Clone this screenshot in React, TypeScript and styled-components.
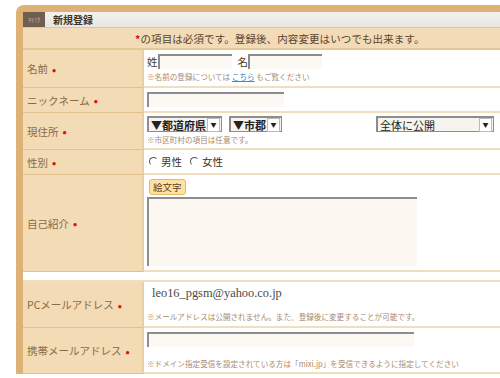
import * as React from 'react';
import styled, { createGlobalStyle } from 'styled-components';

const GlobalStyle = createGlobalStyle`
  html, body {
    margin: 0;
    padding: 0;
    background: #ffffff;
    overflow: hidden;
  }
  body {
    font-family: 'Noto Sans CJK JP', 'Noto Sans', sans-serif;
  }
`;

const Page = styled.div`
  width: 500px;
  height: 378px;
  padding: 5px 0 0 16px;
  box-sizing: border-box;
  overflow: hidden;
`;

const Frame = styled.div`
  width: 500px;
  border-left: 7px solid #deb277;
  border-top: 7px solid #deb277;
  border-top-left-radius: 8px;
  background: #deb277;
`;

const Header = styled.div`
  display: flex;
  align-items: center;
  height: 15px;
  background: linear-gradient(#f4f2ee, #e9e5df);
  border-bottom: 1px solid #d9c6a4;
`;

const HeaderBadge = styled.span`
  display: flex;
  align-items: center;
  justify-content: center;
  width: 22px;
  height: 15px;
  background: #6e5f50;
  color: #c8bba8;
  font-size: 6px;
`;

const HeaderTitle = styled.span`
  margin-left: 8px;
  font-size: 10px;
  font-weight: 700;
  color: #3e3428;
`;

const Notice = styled.div`
  height: 20px;
  display: flex;
  align-items: center;
  padding-left: 112px;
  background: #f2dbb6;
  border-bottom: 2px solid #e6c896;
  font-size: 10.5px;
  color: #5a4330;
  letter-spacing: 0.1px;
`;

const Req = styled.span`
  color: #d2140f;
  font-weight: 700;
`;

const Table = styled.div`
  display: grid;
  grid-template-columns: 121px 1fr;
  background: #ffffff;
`;

const Label = styled.div<{ h: number }>`
  height: ${(p): string => `${p.h}px`};
  display: flex;
  align-items: center;
  padding-left: 4px;
  background: #f2dbb5;
  border-right: 2px solid #e9cfa2;
  border-bottom: 1px solid #e2c28c;
  font-size: 10.5px;
  color: #8c6a44;
  white-space: nowrap;
`;

const Dot = styled.span`
  color: #d2140f;
  margin-left: 4px;
  font-size: 11px;
  font-weight: 700;
`;

const Value = styled.div<{ h: number }>`
  height: ${(p): string => `${p.h}px`};
  display: flex;
  flex-direction: column;
  justify-content: center;
  gap: 2px;
  padding-left: 3px;
  border-bottom: 2px solid #efdfbf;
  box-sizing: border-box;
`;

const Spacer = styled.div`
  grid-column: 1 / 3;
  height: 8px;
  background: #ffffff;
  border-bottom: 2px solid #efdfbf;
`;

const Line = styled.div`
  display: flex;
  align-items: center;
`;

const Kanji = styled.span`
  font-size: 10.5px;
  color: #4a3a2c;
`;

const Input = styled.div<{ w: number }>`
  width: ${(p): string => `${p.w}px`};
  height: 15px;
  background: #fcf8f3;
  border-top: 2px solid #8d8d8d;
  border-left: 2px solid #8d8d8d;
  box-sizing: border-box;
`;

const Note = styled.div`
  font-size: 7.6px;
  color: #a88a6c;
  white-space: nowrap;
`;

const Link = styled.span`
  color: #3a8bc8;
  text-decoration: underline;
`;

const Select = styled.div<{ w: number }>`
  width: ${(p): string => `${p.w}px`};
  height: 16px;
  display: flex;
  align-items: center;
  justify-content: space-between;
  border: 1px solid #8d8d8d;
  border-top-width: 2px;
  border-left-width: 2px;
  background: #f7f3ee;
  box-sizing: border-box;
  font-size: 11px;
  font-weight: 700;
  color: #222;
  padding-left: 2px;
  margin-right: 7px;
`;

const SelectArrow = styled.span`
  width: 11px;
  height: 12px;
  margin-right: 1px;
  display: flex;
  align-items: center;
  justify-content: center;
  background: #fff;
  border: 1px solid #bbb;
  font-size: 6px;
  color: #222;
`;

const Radio = styled.span`
  display: inline-block;
  width: 7px;
  height: 7px;
  border-radius: 50%;
  border: 1.5px solid transparent;
  border-top-color: #555;
  border-left-color: #555;
  margin: 0 3px 0 2px;
`;

const RadioText = styled.span`
  font-size: 10.5px;
  color: #3c3228;
  margin-right: 6px;
`;

const EmojiButton = styled.span`
  align-self: flex-start;
  margin-left: 2px;
  padding: 0 3px;
  height: 14px;
  line-height: 14px;
  font-size: 9.5px;
  color: #5a4026;
  background: #fde2a2;
  border: 1px solid #e6b766;
  border-radius: 3px;
`;

const TextArea = styled.div`
  width: 270px;
  height: 69px;
  background: #fcf7f1;
  border-top: 2px solid #8d8d8d;
  border-left: 2px solid #8d8d8d;
  box-sizing: border-box;
`;

const Email = styled.div`
  font-family: 'Liberation Serif', serif;
  font-size: 12.4px;
  color: #4a4a4a;
  padding-left: 5px;
  margin-bottom: 8px;
`;

const App = (): JSX.Element => (
  <Page>
    <GlobalStyle />
    <Frame>
      <Header>
        <HeaderBadge>ﾏｲﾐｸ</HeaderBadge>
        <HeaderTitle>新規登録</HeaderTitle>
      </Header>
      <Notice>
        <Req>*</Req>の項目は必須です。登録後、内容変更はいつでも出来ます。
      </Notice>
      <Table>
        <Label h={37}>
          名前<Dot>•</Dot>
        </Label>
        <Value h={38}>
          <Line>
            <Kanji>姓</Kanji>
            <Input w={74} />
            <Kanji style={{ marginLeft: 6 }}>名</Kanji>
            <Input w={74} />
          </Line>
          <Note>
            ※名前の登録については <Link>こちら</Link> もご覧ください
          </Note>
        </Value>

        <Label h={24}>
          ニックネーム<Dot>•</Dot>
        </Label>
        <Value h={25}>
          <Line>
            <Input w={137} />
          </Line>
        </Value>

        <Label h={36}>
          現住所<Dot>•</Dot>
        </Label>
        <Value h={37}>
          <Line>
            <Select w={75}>
              ▼都道府県<SelectArrow>▼</SelectArrow>
            </Select>
            <Select w={53}>
              ▼市郡<SelectArrow>▼</SelectArrow>
            </Select>
            <Select w={118} style={{ marginLeft: 87, fontWeight: 400 }}>
              全体に公開<SelectArrow>▼</SelectArrow>
            </Select>
          </Line>
          <Note>※市区町村の項目は任意です。</Note>
        </Value>

        <Label h={24}>
          性別<Dot>•</Dot>
        </Label>
        <Value h={25}>
          <Line>
            <Radio />
            <RadioText>男性</RadioText>
            <Radio />
            <RadioText>女性</RadioText>
          </Line>
        </Value>

        <Label h={96}>
          自己紹介<Dot>•</Dot>
        </Label>
        <Value h={97}>
          <EmojiButton>絵文字</EmojiButton>
          <TextArea />
        </Value>

        <Spacer />

        <Label h={45}>
          PCメールアドレス<Dot>•</Dot>
        </Label>
        <Value h={46}>
          <Email>leo16_pgsm@yahoo.co.jp</Email>
          <Note>※メールアドレスは公開されません。また、登録後に変更することが可能です。</Note>
        </Value>

        <Label h={45}>
          携帯メールアドレス<Dot>•</Dot>
        </Label>
        <Value h={46}>
          <Input w={267} style={{ marginBottom: 9 }} />
          <Note>※ドメイン指定受信を設定されている方は「mixi.jp」を受信できるように指定してください</Note>
        </Value>
      </Table>
    </Frame>
  </Page>
);

export default App;
